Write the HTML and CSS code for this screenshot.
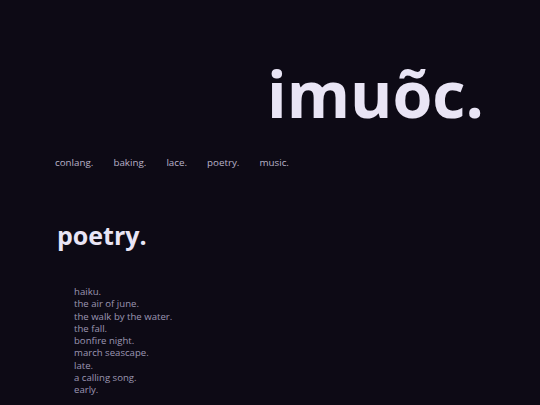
FILE: index.html
```html
<!DOCTYPE html>
<html>
<head>
<meta charset="utf-8">
<link rel="stylesheet" href="styles.css">
</head>
<body>
<header class="masthead">
  <h1 class="logo">imuõc.</h1>
</header>
<nav class="nav">
  <a>conlang.</a>
  <a>baking.</a>
  <a>lace.</a>
  <a>poetry.</a>
  <a>music.</a>
</nav>
<main class="content">
  <h2 class="section-title">poetry.</h2>
  <ul class="poems">
    <li>haiku.</li>
    <li>the air of june.</li>
    <li>the walk by the water.</li>
    <li>the fall.</li>
    <li>bonfire night.</li>
    <li>march seascape.</li>
    <li>late.</li>
    <li>a calling song.</li>
    <li>early.</li>
  </ul>
</main>
</body>
</html>
```
FILE: styles.css
```css
html, body {
  margin: 0;
  padding: 0;
  background: #0d0a15;
  font-family: "Open Sans", sans-serif;
  height: 100%;
}
.masthead {
  display: flex;
  justify-content: flex-start;
  padding: 48px 0 0 267px;
}
.logo {
  margin: 0;
  font-size: 64.5px;
  font-weight: 700;
  line-height: 90px;
  color: #e9e5f5;
}
.nav {
  display: flex;
  gap: 20px;
  padding: 17px 0 0 55px;
}
.nav a {
  font-size: 9.8px;
  color: #b9b3c9;
  line-height: 16px;
}
.content {
  padding: 47px 0 0 57px;
}
.section-title {
  margin: 0;
  font-size: 25px;
  font-weight: 700;
  line-height: 34px;
  color: #e9e5f5;
}
.poems {
  list-style: none;
  margin: 0;
  padding: 34px 0 0 17px;
}
.poems li {
  font-size: 9.6px;
  line-height: 12.3px;
  color: #9c96b2;
}
```
